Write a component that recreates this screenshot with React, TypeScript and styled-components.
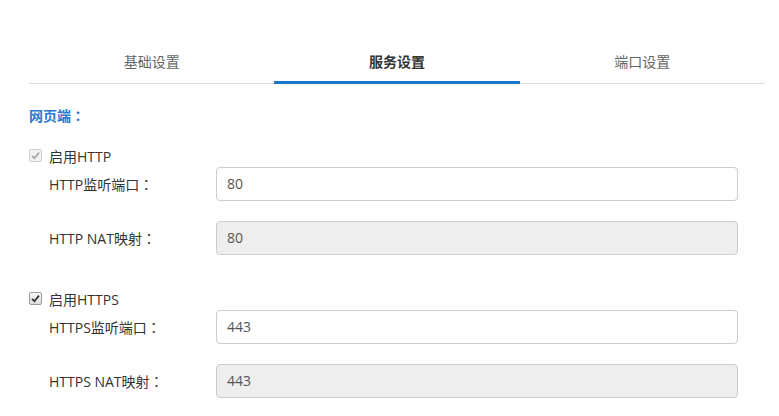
import React from "react";
import styled, { createGlobalStyle } from "styled-components";

const Global = createGlobalStyle`
  html, body { margin: 0; padding: 0; background: #fff; }
  body { font-family: "Open Sans", "Noto Sans CJK SC", sans-serif; color: #333; }
`;

const Page = styled.div`
  padding: 41px 0 0 29px;
  width: 736px;
`;

const TabBar = styled.div`
  display: flex;
  border-bottom: 1px solid #dddddd;
`;

const Tab = styled.div<{ $active?: boolean }>`
  flex: 1;
  box-sizing: border-box;
  text-align: center;
  font-size: 14px;
  height: ${(p) => (p.$active ? "43px" : "42px")};
  line-height: ${(p) => (p.$active ? "38px" : "42px")};
  padding-top: ${(p) => (p.$active ? "2px" : "0")};
  margin-bottom: ${(p) => (p.$active ? "-1px" : "0")};
  border-bottom: ${(p) => (p.$active ? "3px solid #1b74c8" : "none")};
  color: ${(p) => (p.$active ? "#333" : "#666")};
  font-weight: ${(p) => (p.$active ? 700 : 400)};
`;

const Title = styled.div`
  margin-top: 21px;
  line-height: 20px;
  font-size: 14px;
  font-weight: 700;
  color: #2679cf;
`;

const Colon = styled.span`
  font-family: "Noto Sans CJK TC", sans-serif;
`;

const Section = styled.div<{ $gap: number }>`
  margin-top: ${(p) => p.$gap}px;
  display: flex;
  flex-direction: column;
`;

const CheckRow = styled.label`
  display: flex;
  align-items: center;
  height: 21px;
  font-size: 14px;
  color: #333;
`;

const Box = styled.span<{ $disabled?: boolean }>`
  box-sizing: border-box;
  width: 13px;
  height: 13px;
  margin-right: 7px;
  border: 1px solid ${(p) => (p.$disabled ? "#cfcfcf" : "#9a9a9a")};
  border-radius: 2px;
  background: ${(p) =>
    p.$disabled ? "#f2f2f2" : "linear-gradient(#fafafa, #dcdcdc)"};
  display: flex;
  align-items: center;
  justify-content: center;
`;

const Fields = styled.div`
  margin-top: 1px;
  display: flex;
  flex-direction: column;
  gap: 20px;
`;

const FormRow = styled.div`
  display: flex;
  align-items: center;
  height: 34px;
  padding-left: 20px;
`;

const Label = styled.span`
  width: 167px;
  font-size: 14px;
  color: #333;
`;

const Input = styled.div<{ $disabled?: boolean }>`
  box-sizing: border-box;
  width: 522px;
  height: 34px;
  line-height: 32px;
  padding: 0 10px;
  border: 1px solid #cccccc;
  border-radius: 4px;
  background: ${(p) => (p.$disabled ? "#eeeeee" : "#fff")};
  font-size: 14px;
  color: #555;
`;

const Check = ({ disabled }: { disabled?: boolean }) => (
  <Box $disabled={disabled}>
    <svg width="9" height="9" viewBox="0 0 9 9">
      <path
        d="M1 4.8 L3.4 7.2 L8 1.6"
        fill="none"
        stroke={disabled ? "#a8a8a8" : "#333"}
        strokeWidth="1.8"
      />
    </svg>
  </Box>
);

const sections = [
  {
    name: "启用HTTP",
    disabled: true,
    gap: 19,
    rows: [
      { label: "HTTP监听端口", value: "80", ro: false },
      { label: "HTTP NAT映射", value: "80", ro: true },
    ],
  },
  {
    name: "启用HTTPS",
    disabled: false,
    gap: 33,
    rows: [
      { label: "HTTPS监听端口", value: "443", ro: false },
      { label: "HTTPS NAT映射", value: "443", ro: true },
    ],
  },
];

export default function App() {
  return (
    <>
      <Global />
      <Page>
        <TabBar>
          <Tab>基础设置</Tab>
          <Tab $active>服务设置</Tab>
          <Tab>端口设置</Tab>
        </TabBar>
        <Title>
          网页端<Colon>：</Colon>
        </Title>
        {sections.map((s) => (
          <Section key={s.name} $gap={s.gap}>
            <CheckRow>
              <Check disabled={s.disabled} />
              {s.name}
            </CheckRow>
            <Fields>
              {s.rows.map((r) => (
                <FormRow key={r.label}>
                  <Label>
                    {r.label}
                    <Colon>：</Colon>
                  </Label>
                  <Input $disabled={r.ro}>{r.value}</Input>
                </FormRow>
              ))}
            </Fields>
          </Section>
        ))}
      </Page>
    </>
  );
}
